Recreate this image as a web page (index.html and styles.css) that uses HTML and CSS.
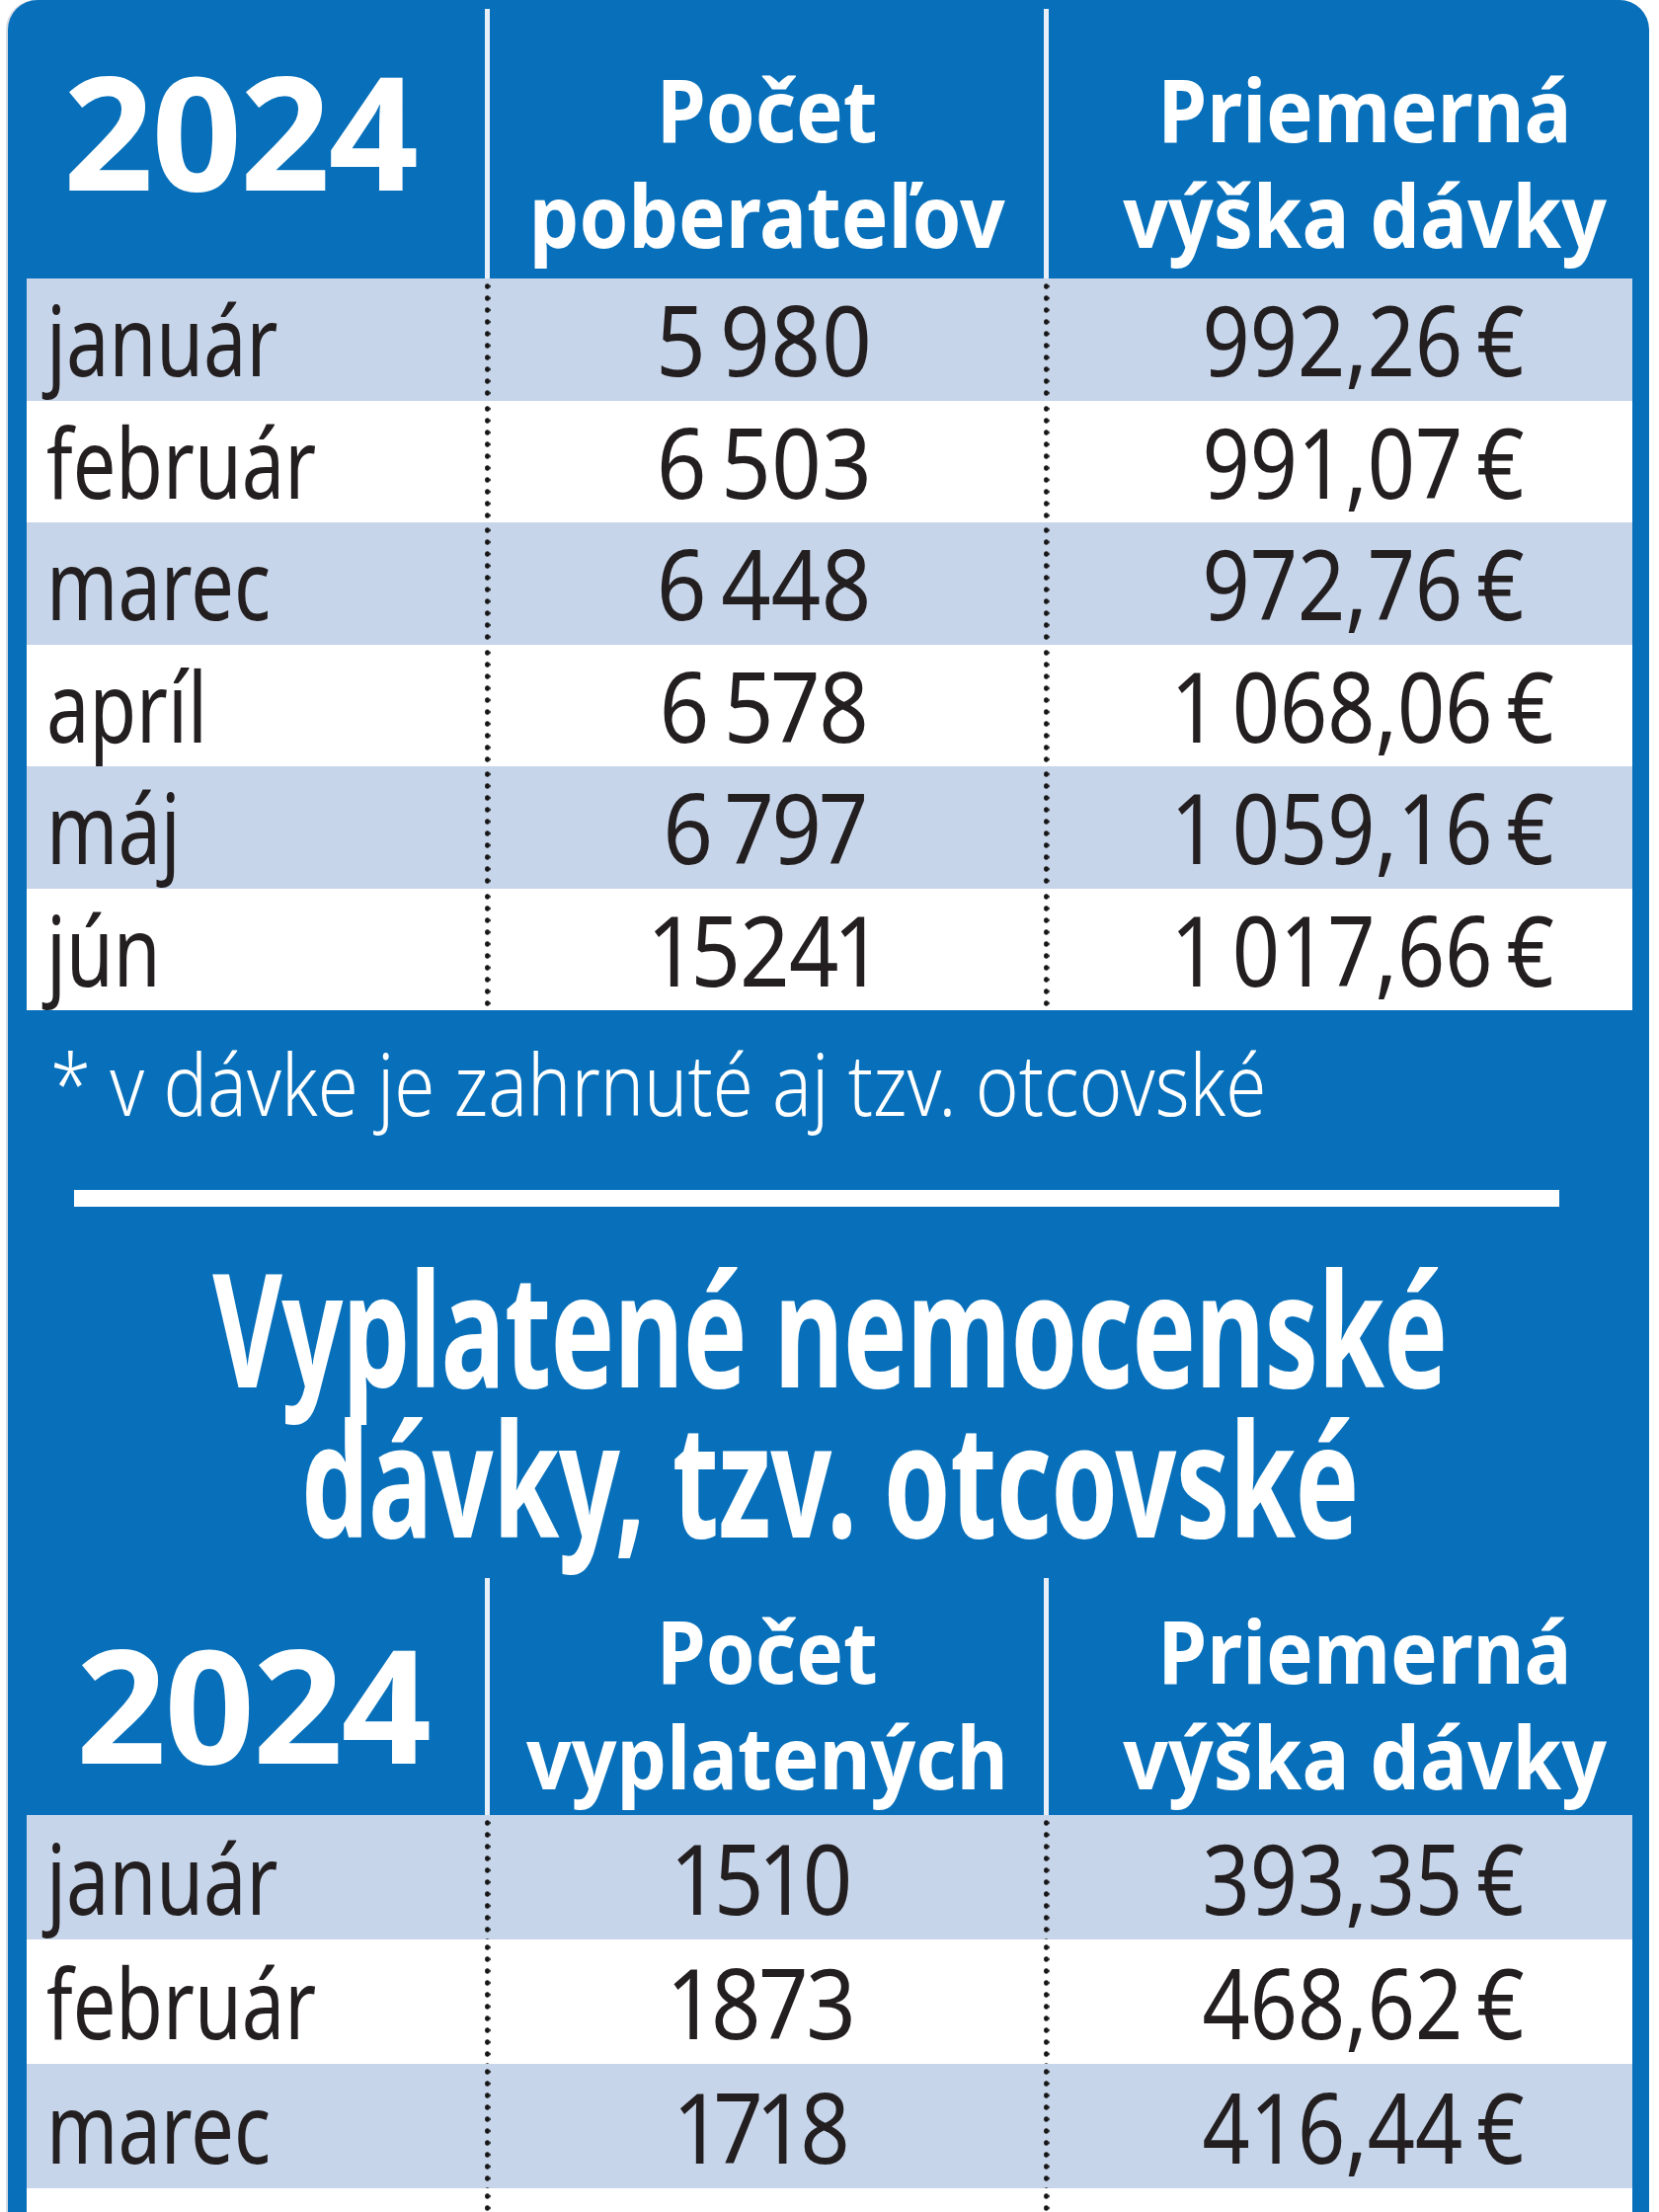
FILE: index.html
```html
<!DOCTYPE html>
<html lang="sk">
<head>
<meta charset="utf-8">
<title>Otcovské 2024</title>
<link rel="stylesheet" href="styles.css">
</head>
<body>
<div class="panel">
  <section class="tbl t1">
    <div class="thead">
      <div class="th year">2024</div>
      <div class="th lbl"><span>Počet<br>poberateľov</span></div>
      <div class="th lbl avg"><span>Priemerná<br>výška dávky</span></div>
    </div>
    <div class="row shade"><div class="c month"><span>január</span></div><div class="c num"><span>5&#8201;980</span></div><div class="c amt"><span>992,26&#8201;€</span></div></div>
    <div class="row"><div class="c month"><span>február</span></div><div class="c num"><span>6&#8201;503</span></div><div class="c amt"><span>991,07&#8201;€</span></div></div>
    <div class="row shade"><div class="c month"><span>marec</span></div><div class="c num"><span>6&#8201;448</span></div><div class="c amt"><span>972,76&#8201;€</span></div></div>
    <div class="row"><div class="c month"><span>apríl</span></div><div class="c num"><span>6&#8201;578</span></div><div class="c amt"><span>1&#8201;068,06&#8201;€</span></div></div>
    <div class="row shade"><div class="c month"><span>máj</span></div><div class="c num"><span>6&#8201;797</span></div><div class="c amt"><span>1&#8201;059,16&#8201;€</span></div></div>
    <div class="row"><div class="c month"><span>jún</span></div><div class="c num"><span>15241</span></div><div class="c amt"><span>1&#8201;017,66&#8201;€</span></div></div>
  </section>

  <p class="note"><span>* v dávke je zahrnuté aj tzv. otcovské</span></p>
  <div class="sep"></div>
  <h2 class="title"><span class="line">Vyplatené nemocenské</span><span class="line">dávky, tzv. otcovské</span></h2>

  <section class="tbl t2">
    <div class="thead">
      <div class="th year">2024</div>
      <div class="th lbl"><span>Počet<br>vyplatených</span></div>
      <div class="th lbl avg"><span>Priemerná<br>výška dávky</span></div>
    </div>
    <div class="row shade"><div class="c month"><span>január</span></div><div class="c num"><span>1510</span></div><div class="c amt"><span>393,35&#8201;€</span></div></div>
    <div class="row"><div class="c month"><span>február</span></div><div class="c num"><span>1873</span></div><div class="c amt"><span>468,62&#8201;€</span></div></div>
    <div class="row shade"><div class="c month"><span>marec</span></div><div class="c num"><span>1718</span></div><div class="c amt"><span>416,44&#8201;€</span></div></div>
    <div class="row"><div class="c month"><span>apríl</span></div><div class="c num"><span>1714</span></div><div class="c amt"><span>412,18&#8201;€</span></div></div>
  </section>
</div>
</body>
</html>
```

FILE: styles.css
```css
html, body {
  margin: 0;
  padding: 0;
  background: #ffffff;
}

body {
  width: 1680px;
  height: 2240px;
  overflow: hidden;
  font-family: "Noto Sans", "Open Sans", "Liberation Sans", sans-serif;
  color: #231f20;
}

.panel {
  margin-left: 8px;
  width: 1662px;
  height: 2240px;
  box-sizing: border-box;
  padding: 9px 17px 0 19px;
  background: #0870ba;
  border-radius: 30px 30px 0 0;
  box-shadow: -2px 0 0 #d9dde3;
  overflow: hidden;
}

/* ---------- tables ---------- */
.tbl {
  display: flex;
  flex-direction: column;
}

.thead {
  display: grid;
  grid-template-columns: 464px 566px 596px;
  color: #ffffff;
  font-weight: 700;
}

.t1 .thead { height: 273px; }
.t2 .thead { height: 240px; margin-top: 27px; }

.th {
  box-sizing: border-box;
  text-align: center;
  white-space: nowrap;
}

.th.year {
  font-size: 160px;
  line-height: 160px;
  letter-spacing: -2px;
  padding-right: 32px;
}
.t1 .th.year { padding-top: 42px; }
.t2 .th.year { padding-top: 46px; padding-right: 6px; }

.th.lbl {
  border-left: 5px solid #e9eff8;
  font-size: 88px;
  line-height: 107px;
}
.th.lbl span {
  display: inline-block;
  transform: scaleX(0.91);
  transform-origin: 50% 50%;
}
.t1 .th.lbl { padding-top: 48px; }
.t2 .th.lbl { padding-top: 20px; }

.th.avg { padding-left: 50px; }

.row {
  display: grid;
  grid-template-columns: 464px 566px 596px;
  background: #ffffff;
  font-size: 98px;
  white-space: nowrap;
}
.row.shade { background: #c7d5ea; }

.t1 .row { height: 123.5px; line-height: 123.5px; }
.t2 .row { height: 126px; line-height: 126px; }

.c { box-sizing: border-box; }

.c span { display: inline-block; }

.c.month { padding-left: 20px; }
.c.month span {
  transform: scaleX(0.79);
  transform-origin: 0 50%;
}

.c.num,
.c.amt {
  text-align: center;
  background-image: radial-gradient(circle, #161616 0 2.4px, transparent 3px);
  background-size: 6px 12px;
  background-repeat: repeat-y;
  background-position: -0.5px 2px;
}

.c.num span {
  font-variant-numeric: proportional-nums;
  transform: scaleX(0.9);
  transform-origin: 50% 50%;
}

.c.amt { padding-left: 50px; }
.c.amt span {
  transform: scaleX(0.86);
  transform-origin: 50% 50%;
}

/* ---------- note, separator, title ---------- */
.note {
  margin: 24px 0 0 24px;
  color: #ffffff;
  font-size: 86px;
  line-height: 100px;
  font-weight: 300;
  white-space: nowrap;
}
.note span {
  display: inline-block;
  transform: scaleX(0.865);
  transform-origin: 0 50%;
}

.sep {
  margin: 58px 0 0 48px;
  width: 1504px;
  height: 17px;
  background: #ffffff;
}

.title {
  margin: 45px 0 0 0;
  display: flex;
  flex-direction: column;
  align-items: center;
  color: #ffffff;
  font-size: 160px;
  line-height: 152px;
  font-weight: 700;
  letter-spacing: -1px;
  white-space: nowrap;
}
.title .line {
  display: block;
  transform: scaleX(0.68);
  transform-origin: 50% 50%;
}
```
